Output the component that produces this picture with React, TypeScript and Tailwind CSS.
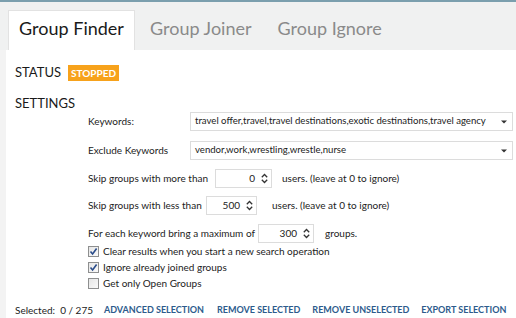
import React from 'react'

const font = { fontFamily: 'Lato, "Noto Sans", sans-serif' }

function Caret() {
  return (
    <svg width="6" height="4" viewBox="0 0 6 4" className="shrink-0 mr-[1px]">
      <path d="M0 0.5h6L3 3.5z" fill="#333" />
    </svg>
  )
}

function Spinner({ value, width }: { value: string; width: string }) {
  return (
    <div className={`${width} h-[19px] shrink-0 border border-[#dcdcdc] bg-white flex items-center justify-end pr-[3px]`}>
      <span className="text-[#222] mr-[6px]">{value}</span>
      <svg width="7" height="11" viewBox="0 0 7 11">
        <path d="M0.8 4.2L3.5 1.5L6.2 4.2" stroke="#333" strokeWidth="1.3" fill="none" />
        <path d="M0.8 6.8L3.5 9.5L6.2 6.8" stroke="#333" strokeWidth="1.3" fill="none" />
      </svg>
    </div>
  )
}

function Check({ checked, label }: { checked: boolean; label: string }) {
  return (
    <div className="flex items-center gap-[4px] h-[16px]">
      <div className="w-[11px] h-[11px] border border-[#8e8f8f] bg-gradient-to-br from-[#e6e6e6] to-[#fafafa] flex items-center justify-center">
        {checked && (
          <svg width="9" height="9" viewBox="0 0 9 9">
            <path d="M1.5 4.5L3.6 7L7.6 1.5" stroke="#2a4c8a" strokeWidth="1.6" fill="none" />
          </svg>
        )}
      </div>
      <span className="text-[#222]">{label}</span>
    </div>
  )
}

export default function App() {
  return (
    <div className="w-[516px] h-[318px] overflow-hidden bg-white border-t-2 border-[#7b9fae] flex flex-col whitespace-nowrap" style={font}>
      {/* Tabs */}
      <div className="h-[48px] bg-[#f0f1f1] flex items-end pl-[8px] shrink-0">
        <div className="w-[127px] h-[40px] bg-white border border-b-0 border-[#e2e2e2] flex items-center justify-center text-[18px] text-[#1a1a1a] pb-[4px]">
          Group Finder
        </div>
        <div className="h-[40px] flex items-center pl-[15px] pr-[14px] text-[18px] text-[#8a8a8a] pb-[4px]">Group Joiner</div>
        <div className="h-[40px] flex items-center pl-[12px] text-[18px] text-[#8a8a8a] pb-[4px]">Group Ignore</div>
      </div>

      <div className="flex flex-1 min-h-0">
        <div className="w-[6px] bg-[#f3f3f3] shrink-0" />
        <div className="flex-1 flex flex-col pl-[9px]">
          <div className="flex items-center mt-[15px] h-[16px]">
            <span className="text-[13px] text-[#1a1a1a]">STATUS</span>
            <span className="ml-[7px] bg-[#f7a21b] text-white text-[10px] font-bold px-[3px] h-[16px] flex items-center">STOPPED</span>
          </div>

          <div className="text-[13px] text-[#1a1a1a] mt-[14px] leading-[16px]">SETTINGS</div>

          <div className="flex flex-col pl-[73px] mt-[1px] text-[10px] text-[#222]">
            <div className="flex items-center h-[19px]">
              <span className="w-[102px] shrink-0">Keywords:</span>
              <div className="flex-1 h-[19px] mr-[3px] border border-[#dcdcdc] flex items-center justify-between pl-[4px] pr-[4px]">
                <span className="text-[9.6px]">travel offer,travel,travel destinations,exotic destinations,travel agency</span>
                <Caret />
              </div>
            </div>
            <div className="flex items-center h-[19px] mt-[10px]">
              <span className="w-[102px] shrink-0">Exclude Keywords</span>
              <div className="flex-1 h-[19px] mr-[3px] border border-[#dcdcdc] flex items-center justify-between pl-[4px] pr-[4px]">
                <span className="text-[9.6px]">vendor,work,wrestling,wrestle,nurse</span>
                <Caret />
              </div>
            </div>

            <div className="flex items-center h-[19px] mt-[9px]">
              <span className="w-[127px] shrink-0">Skip groups with more than</span>
              <Spinner value="0" width="w-[57px]" />
              <span className="ml-[10px]">users. (leave at 0 to ignore)</span>
            </div>
            <div className="flex items-center h-[19px] mt-[8px]">
              <span className="w-[118px] shrink-0">Skip groups with less than</span>
              <Spinner value="500" width="w-[51px]" />
              <span className="ml-[15px]">users. (leave at 0 to ignore)</span>
            </div>
            <div className="flex items-center h-[19px] mt-[9px]">
              <span className="w-[170px] shrink-0">For each keyword bring a maximum of</span>
              <Spinner value="300" width="w-[56px]" />
              <span className="ml-[11px]">groups.</span>
            </div>

            <div className="flex flex-col">
              <Check checked label="Clear results when you start a new search operation" />
              <Check checked label="Ignore already joined groups" />
              <Check checked={false} label="Get only Open Groups" />
            </div>
          </div>

          <div className="flex items-center mt-auto mb-[1px] h-[14px] text-[9px]">
            <span className="text-[#222] w-[89px] shrink-0 text-[10px]">Selected:&nbsp; 0 / 275</span>
            <span className="text-[#2d5b8c] font-bold">ADVANCED SELECTION</span>
            <span className="text-[#2d5b8c] font-bold ml-[13px]">REMOVE SELECTED</span>
            <span className="text-[#2d5b8c] font-bold ml-[12px]">REMOVE UNSELECTED</span>
            <span className="text-[#2d5b8c] font-bold ml-[12px]">EXPORT SELECTION</span>
          </div>
        </div>
      </div>
    </div>
  )
}
